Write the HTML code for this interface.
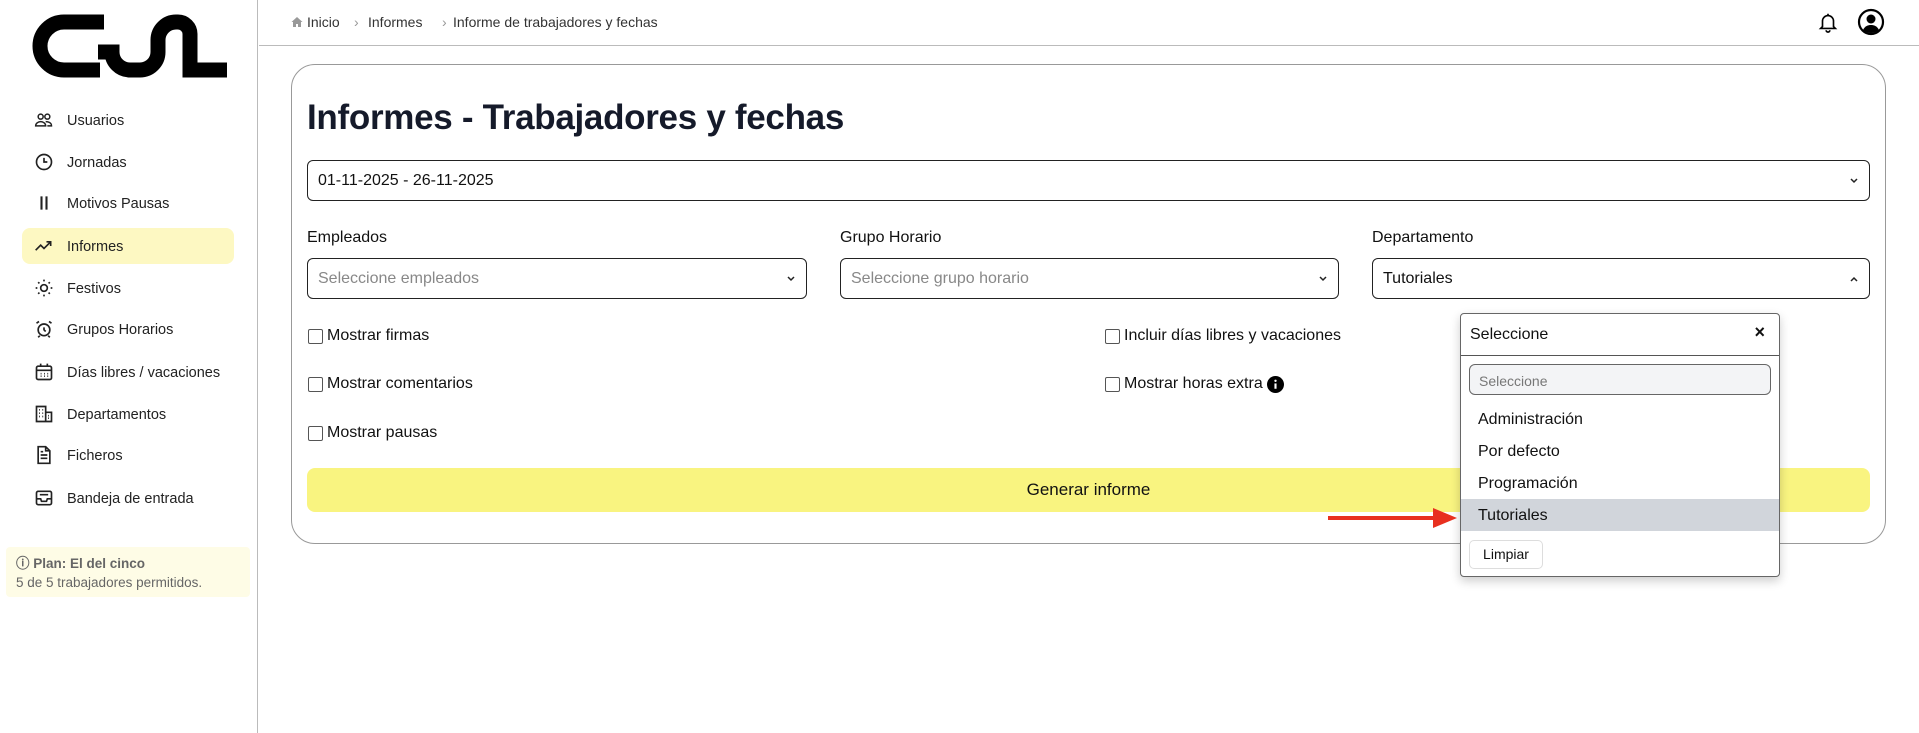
<!DOCTYPE html>
<html><head><meta charset="utf-8">
<style>
*{box-sizing:border-box;margin:0;padding:0}
body{width:1919px;height:733px;background:#fff;font-family:"Liberation Sans",sans-serif;color:#111;position:relative;overflow:hidden}
.abs{position:absolute}
.side{left:0;top:0;width:258px;height:733px;border-right:1.5px solid #bbb}
.nav{position:absolute;left:22px;width:212px;height:36px;display:flex;align-items:center;font-size:14.5px;color:#222}
.nav svg{position:absolute;left:12px;width:20px;height:20px}
.nav span{position:absolute;left:45px;top:11px}
.nav.act{background:#fdf8c2;border-radius:8px}
.hdr{left:259px;top:0;right:0;height:46px;border-bottom:1.5px solid #bbb}
.bc{position:absolute;top:14px;font-size:14px;color:#333}
.card{left:291px;top:64px;width:1595px;height:480px;border:1px solid #999;border-radius:24px}
.box{position:absolute;border:1.2px solid #222;border-radius:6px;font-size:16px;display:flex;align-items:center;padding-left:10px}
.lbl{position:absolute;font-size:16px;top:229px;color:#111}
.chk{position:absolute;font-size:16px;display:flex;align-items:center;gap:4px}
.chk i{display:inline-block;width:15px;height:15px;border:1.5px solid #555;border-radius:2px}
.chev{position:absolute;right:10px;top:50%;margin-top:-4px}
</style></head><body>
<div class="abs side">
<svg class="abs" style="left:0;top:0" width="258" height="100" viewBox="0 0 258 100"><g fill="none" stroke="#000" stroke-width="15"><path d="M104,22 H64 A24,24 0 0 0 64,70 H100"/><path d="M98,52 H112 A18,18 0 0 0 130,70 H140 A18,18 0 0 0 158,52 V40 A18,18 0 0 1 176,22 H178 A12,12 0 0 1 190,34 V70 H227"/></g></svg>
<div class="nav" style="top:102px"><svg viewBox="0 0 24 24" fill="none" stroke="#222" stroke-width="1.8"><circle cx="8" cy="8" r="3"/><circle cx="16" cy="8" r="3"/><path d="M2 19c0-3 3-5 6-5s6 2 6 5zM14 14c3 0 7 1 7 5h-5"/></svg><span>Usuarios</span></div>
<div class="nav" style="top:144px"><svg viewBox="0 0 24 24" fill="none" stroke="#222" stroke-width="2"><circle cx="12" cy="12" r="9"/><path d="M12 7v5h4"/></svg><span>Jornadas</span></div>
<div class="nav" style="top:185px"><svg viewBox="0 0 24 24" stroke="#222" stroke-width="2.5"><path d="M9 4v16M15 4v16"/></svg><span>Motivos Pausas</span></div>
<div class="nav act" style="top:228px"><svg viewBox="0 0 24 24" fill="none" stroke="#222" stroke-width="2"><path d="M2 17l6-6 4 4 8-8M15 7h5v5"/></svg><span>Informes</span></div>
<div class="nav" style="top:270px"><svg viewBox="0 0 24 24" fill="none" stroke="#222" stroke-width="2"><circle cx="12" cy="12" r="4"/><path d="M12 2v2M12 20v2M2 12h2M20 12h2M5 5l1.5 1.5M17.5 17.5L19 19M5 19l1.5-1.5M17.5 6.5L19 5"/></svg><span>Festivos</span></div>
<div class="nav" style="top:311px"><svg viewBox="0 0 24 24" fill="none" stroke="#222" stroke-width="2"><circle cx="12" cy="13" r="7"/><path d="M12 10v3l2 2M3 5l3-2M21 5l-3-2M7 20l-2 2M17 20l2 2"/></svg><span>Grupos Horarios</span></div>
<div class="nav" style="top:354px"><svg viewBox="0 0 24 24" fill="none" stroke="#222" stroke-width="2"><rect x="3" y="5" width="18" height="16" rx="2"/><path d="M3 10h18M8 2v4M16 2v4M8 14h1M12 14h1M16 14h1M8 17h1M12 17h1M16 17h1"/></svg><span>Días libres / vacaciones</span></div>
<div class="nav" style="top:396px"><svg viewBox="0 0 24 24" fill="none" stroke="#222" stroke-width="2"><path d="M3 21V3h11v18M14 10h7v11M2 21h20M6 7h1M10 7h1M6 11h1M10 11h1M6 15h1M10 15h1M17 14h1M17 17h1"/></svg><span>Departamentos</span></div>
<div class="nav" style="top:437px"><svg viewBox="0 0 24 24" fill="none" stroke="#222" stroke-width="2"><path d="M5 2h9l5 5v15H5zM14 2v5h5M8 12h8M8 16h8M8 8h3"/></svg><span>Ficheros</span></div>
<div class="nav" style="top:480px"><svg viewBox="0 0 24 24" fill="none" stroke="#222" stroke-width="2"><rect x="3" y="4" width="18" height="16" rx="2"/><path d="M3 13h5l1 3h6l1-3h5M7 8h10"/></svg><span>Bandeja de entrada</span></div>
<div class="abs" style="left:6px;top:547px;width:244px;height:50px;background:#fefce6;border-radius:4px;font-size:13.5px;color:#666;padding:7px 0 0 10px;line-height:19px">
<div><b>ⓘ Plan: El del cinco</b></div><div>5 de 5 trabajadores permitidos.</div></div>
</div>
<div class="abs hdr">
<svg class="abs" style="left:32px;top:16px" width="12" height="12" viewBox="0 0 24 24" fill="#999"><path d="M12 2L1 12h3v10h6v-6h4v6h6V12h3z"/></svg>
<div class="bc" style="left:48px">Inicio</div>
<div class="bc" style="left:95px;color:#999">›</div>
<div class="bc" style="left:109px">Informes</div>
<div class="bc" style="left:183px;color:#999">›</div>
<div class="bc" style="left:194px">Informe de trabajadores y fechas</div>
<svg class="abs" style="left:1558px;top:10px" width="22" height="24" viewBox="0 0 24 24" fill="none" stroke="#000" stroke-width="1.8"><path d="M6 17V11a6 6 0 0 1 12 0v6l2 2H4zM10 21a2 2 0 0 0 4 0M12 3v2"/></svg>
<svg class="abs" style="left:1598px;top:8px" width="28" height="28" viewBox="0 0 28 28"><circle cx="14" cy="14" r="12" fill="none" stroke="#000" stroke-width="2.2"/><circle cx="14" cy="11" r="4.5"/><path d="M6 22c2-4 5-5 8-5s6 1 8 5a12 12 0 0 1-16 0z"/></svg>
</div>
<div class="abs card"></div>
<div class="abs" style="left:307px;top:98px;font-size:35px;font-weight:bold;color:#151a2a;letter-spacing:-0.3px">Informes - Trabajadores y fechas</div>
<div class="box" style="left:307px;top:160px;width:1563px;height:41px">01-11-2025 - 26-11-2025<svg class="chev" width="10" height="8" viewBox="0 0 10 8"><path d="M2 2l3 3 3-3" fill="none" stroke="#222" stroke-width="1.5"/></svg></div>
<div class="lbl" style="left:307px">Empleados</div>
<div class="lbl" style="left:840px">Grupo Horario</div>
<div class="lbl" style="left:1372px">Departamento</div>
<div class="box" style="left:307px;top:258px;width:500px;height:41px;color:#888">Seleccione empleados<svg class="chev" width="10" height="8" viewBox="0 0 10 8"><path d="M2 2l3 3 3-3" fill="none" stroke="#222" stroke-width="1.5"/></svg></div>
<div class="box" style="left:840px;top:258px;width:499px;height:41px;color:#888">Seleccione grupo horario<svg class="chev" width="10" height="8" viewBox="0 0 10 8"><path d="M2 2l3 3 3-3" fill="none" stroke="#222" stroke-width="1.5"/></svg></div>
<div class="box" style="left:1372px;top:258px;width:498px;height:41px">Tutoriales<svg class="chev" width="10" height="8" viewBox="0 0 10 8"><path d="M2 6l3-3 3 3" fill="none" stroke="#222" stroke-width="1.5"/></svg></div>
<div class="chk" style="left:308px;top:327px"><i></i>Mostrar firmas</div>
<div class="chk" style="left:308px;top:375px"><i></i>Mostrar comentarios</div>
<div class="chk" style="left:308px;top:424px"><i></i>Mostrar pausas</div>
<div class="chk" style="left:1105px;top:327px"><i></i>Incluir días libres y vacaciones</div>
<div class="chk" style="left:1105px;top:375px"><i></i>Mostrar horas extra <svg width="17" height="17" viewBox="0 0 16 16"><circle cx="8" cy="8" r="8"/><rect x="7" y="7" width="2" height="5" fill="#fff"/><circle cx="8" cy="4.5" r="1.1" fill="#fff"/></svg></div>
<div class="abs" style="left:307px;top:468px;width:1563px;height:44px;background:#f9f480;border-radius:8px;font-size:17px;text-align:center;line-height:44px">Generar informe</div>
<div class="abs" style="left:1460px;top:313px;width:320px;height:264px;background:#fff;border:1px solid #666;border-radius:4px;box-shadow:0 4px 10px rgba(0,0,0,.2)">
<div class="abs" style="left:9px;top:12px;font-size:16px">Seleccione</div>
<div class="abs" style="right:14px;top:8px;font-size:18px;font-weight:bold">×</div>
<div class="abs" style="left:0;right:0;top:41px;border-top:1px solid #555"></div>
<div class="abs" style="left:8px;top:50px;width:302px;height:31px;border:1px solid #666;border-radius:6px;background:#f3f4f6;font-size:14px;color:#777;padding:8px 0 0 9px">Seleccione</div>
<div class="abs" style="left:17px;top:97px;font-size:16px">Administración</div>
<div class="abs" style="left:17px;top:129px;font-size:16px">Por defecto</div>
<div class="abs" style="left:17px;top:161px;font-size:16px">Programación</div>
<div class="abs" style="left:0;right:0;top:185px;height:32px;background:#d1d5db"></div>
<div class="abs" style="left:17px;top:193px;font-size:16px">Tutoriales</div>
<div class="abs" style="left:8px;top:226px;width:74px;height:29px;border:1px solid #ddd;border-radius:5px;font-size:14px;text-align:center;line-height:27px">Limpiar</div>
</div>
<svg class="abs" style="left:1325px;top:505px" width="135" height="26" viewBox="0 0 135 26"><path d="M3 13H110" stroke="#e8301f" stroke-width="4"/><path d="M108 3L132 13L108 23z" fill="#e8301f"/></svg>
</body></html>
